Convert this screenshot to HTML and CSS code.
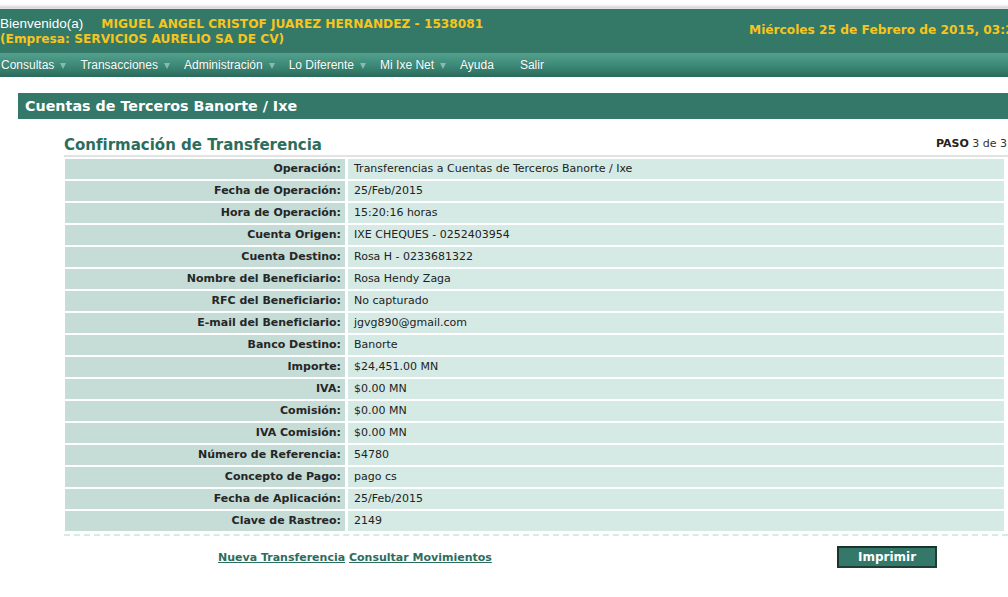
FILE: index.html
```html
<!DOCTYPE html>
<html lang="es">
<head>
<meta charset="utf-8">
<title>Confirmación de Transferencia</title>
<link rel="stylesheet" href="styles.css">
</head>
<body>
<div class="topstrip"></div>
<header class="header">
  <div class="welcome">
    <div class="line1"><span class="bienvenido">Bienvenido(a)</span><span class="name">MIGUEL ANGEL CRISTOF JUAREZ HERNANDEZ - 1538081</span></div>
    <div class="line2">(Empresa: SERVICIOS AURELIO SA DE CV)</div>
  </div>
  <div class="date">Miércoles 25 de Febrero de 2015, 03:20 PM</div>
</header>
<nav class="menu">
  <span class="item">Consultas<i class="arrow"></i></span>
  <span class="item">Transacciones<i class="arrow"></i></span>
  <span class="item">Administración<i class="arrow"></i></span>
  <span class="item">Lo Diferente<i class="arrow"></i></span>
  <span class="item">Mi Ixe Net<i class="arrow"></i></span>
  <span class="item">Ayuda<i class="arrow hidden"></i></span>
  <span class="item">Salir</span>
</nav>
<div class="section-bar">Cuentas de Terceros Banorte / Ixe</div>
<main class="content">
  <div class="title-row">
    <h1 class="title">Confirmación de Transferencia</h1>
    <div class="paso"><b>PASO</b> 3 de 3</div>
  </div>
  <div class="grid">
    <div class="lbl">Operación:</div><div class="val">Transferencias a Cuentas de Terceros Banorte / Ixe</div>
    <div class="lbl">Fecha de Operación:</div><div class="val">25/Feb/2015</div>
    <div class="lbl">Hora de Operación:</div><div class="val">15:20:16 horas</div>
    <div class="lbl">Cuenta Origen:</div><div class="val">IXE CHEQUES - 0252403954</div>
    <div class="lbl">Cuenta Destino:</div><div class="val">Rosa H - 0233681322</div>
    <div class="lbl">Nombre del Beneficiario:</div><div class="val">Rosa Hendy Zaga</div>
    <div class="lbl">RFC del Beneficiario:</div><div class="val">No capturado</div>
    <div class="lbl">E-mail del Beneficiario:</div><div class="val">jgvg890@gmail.com</div>
    <div class="lbl">Banco Destino:</div><div class="val">Banorte</div>
    <div class="lbl">Importe:</div><div class="val">$24,451.00 MN</div>
    <div class="lbl">IVA:</div><div class="val">$0.00 MN</div>
    <div class="lbl">Comisión:</div><div class="val">$0.00 MN</div>
    <div class="lbl">IVA Comisión:</div><div class="val">$0.00 MN</div>
    <div class="lbl">Número de Referencia:</div><div class="val">54780</div>
    <div class="lbl">Concepto de Pago:</div><div class="val">pago cs</div>
    <div class="lbl">Fecha de Aplicación:</div><div class="val">25/Feb/2015</div>
    <div class="lbl">Clave de Rastreo:</div><div class="val">2149</div>
  </div>
  <div class="dashed"></div>
  <div class="actions">
    <div class="links"><a href="#">Nueva Transferencia</a> <a href="#">Consultar Movimientos</a></div>
    <button class="btn" type="button">Imprimir</button>
  </div>
</main>
</body>
</html>
```

FILE: styles.css
```css
html, body {
  margin: 0;
  padding: 0;
  background: #ffffff;
  overflow: hidden;
}
body {
  width: 1008px;
  font-family: "DejaVu Sans", Verdana, sans-serif;
  color: #222;
}
.topstrip {
  height: 9px;
  background: linear-gradient(#ffffff 0%, #ffffff 45%, #d6d6d6 85%, #e8e8e8 100%);
}
.header {
  background: #347868;
  height: 44px;
  display: flex;
  overflow: hidden;
  white-space: nowrap;
}
.welcome {
  width: 749px;
  flex-shrink: 0;
  padding-top: 5px;
}
.line1 {
  height: 17px;
  line-height: 17px;
}
.bienvenido {
  font-family: "Liberation Sans", Arial, sans-serif;
  font-size: 13.5px;
  color: #ffffff;
  margin-right: 18px;
}
.name, .line2, .date {
  font-family: "DejaVu Sans", Verdana, sans-serif;
  font-weight: bold;
  font-size: 12.2px;
  color: #f7c51c;
}
.line2 {
  line-height: 15px;
  margin-top: 1px;
}
.date {
  flex-shrink: 0;
  padding-top: 13px;
  line-height: 17px;
}
.menu {
  height: 24px;
  background: linear-gradient(#52a08d 0%, #3e8a78 50%, #2a6a5a 100%);
  display: flex;
  align-items: center;
  font-family: "Liberation Sans", Arial, sans-serif;
  font-size: 12px;
  color: #ffffff;
  padding-left: 1px;
  text-shadow: 0 0 1px rgba(0,0,0,0.25);
}
.item {
  display: inline-flex;
  align-items: center;
  margin-right: 14px;
}
.arrow {
  display: inline-block;
  width: 0;
  height: 0;
  border-left: 3.5px solid transparent;
  border-right: 3.5px solid transparent;
  border-top: 6px solid #86bcae;
  margin-left: 6px;
  margin-top: 1px;
}
.arrow.hidden {
  visibility: hidden;
}
.section-bar {
  margin: 16px 0 0 18px;
  height: 26px;
  line-height: 27px;
  background: #337868;
  color: #ffffff;
  font-weight: bold;
  font-size: 14.3px;
  padding-left: 7px;
}
.content {
  margin-left: 64px;
}
.title-row {
  display: flex;
  justify-content: space-between;
  align-items: flex-end;
  border-bottom: 2px solid #dfe3e2;
  height: 36px;
}
.title {
  margin: 0;
  font-size: 15px;
  font-weight: bold;
  color: #2c6d5e;
  line-height: 20px;
}
.paso {
  font-size: 11px;
  color: #333;
  line-height: 16px;
  padding-bottom: 3px;
  margin-right: 1px;
}
.paso b {
  color: #222;
}
.grid {
  display: grid;
  grid-template-columns: 280px 656px;
  column-gap: 3px;
  row-gap: 2px;
  margin: 2px 0 0 1px;
  font-size: 11px;
}
.lbl, .val {
  height: 20px;
  line-height: 20px;
}
.lbl {
  background: #c5dcd7;
  text-align: right;
  font-weight: bold;
  color: #262626;
  padding-right: 4px;
}
.val {
  background: #d5eae5;
  padding-left: 6px;
  color: #222;
}
.dashed {
  margin-top: 3px;
  border-top: 2px dashed #d4ebe6;
  height: 0;
}
.actions {
  display: flex;
  align-items: center;
  margin-top: 10px;
}
.links {
  margin-left: 154px;
  font-size: 11px;
  font-weight: bold;
}
.links a {
  color: #2c6d5e;
  text-decoration: underline;
}
.btn {
  margin-left: auto;
  margin-right: 71px;
  width: 100px;
  height: 22px;
  background: #337868;
  border: 2px solid #1f3d36;
  border-top-color: #1a332d;
  border-left-color: #1a332d;
  color: #ffffff;
  font-family: "DejaVu Sans", Verdana, sans-serif;
  font-weight: bold;
  font-size: 12px;
  padding: 0;
}
```
